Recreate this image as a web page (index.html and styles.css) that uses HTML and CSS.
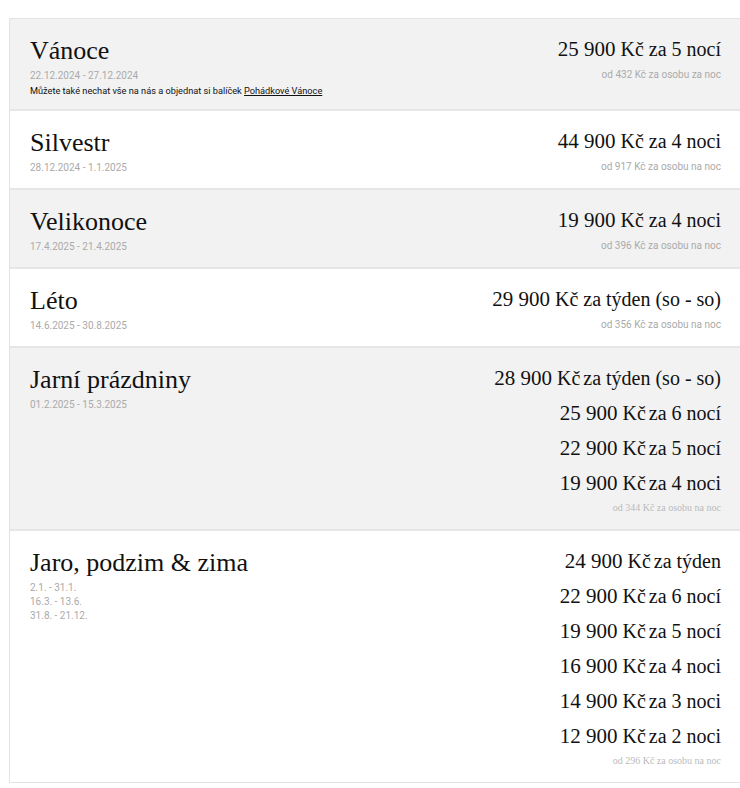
FILE: index.html
```html
<!DOCTYPE html>
<html lang="cs">
<head>
<meta charset="utf-8">
<title>Ceník</title>
<link rel="stylesheet" href="styles.css">
</head>
<body>
<div class="list">
  <div class="row alt first">
    <div class="left">
      <div class="title">Vánoce</div>
      <div class="dates">22.12.2024 - 27.12.2024</div>
      <div class="note">Můžete také nechat vše na nás a objednat si balíček <a href="#">Pohádkové Vánoce</a></div>
    </div>
    <div class="right">
      <div class="price"><span class="num">25 900</span> Kč za 5 nocí</div>
      <div class="sub">od 432 Kč za osobu za noc</div>
    </div>
  </div>
  <div class="row">
    <div class="left">
      <div class="title">Silvestr</div>
      <div class="dates">28.12.2024 - 1.1.2025</div>
    </div>
    <div class="right">
      <div class="price"><span class="num">44 900</span> Kč za 4 noci</div>
      <div class="sub">od 917 Kč za osobu na noc</div>
    </div>
  </div>
  <div class="row alt">
    <div class="left">
      <div class="title">Velikonoce</div>
      <div class="dates">17.4.2025 - 21.4.2025</div>
    </div>
    <div class="right">
      <div class="price"><span class="num">19 900</span> Kč za 4 noci</div>
      <div class="sub">od 396 Kč za osobu na noc</div>
    </div>
  </div>
  <div class="row">
    <div class="left">
      <div class="title">Léto</div>
      <div class="dates">14.6.2025 - 30.8.2025</div>
    </div>
    <div class="right">
      <div class="price"><span class="num">29 900</span> Kč za týden (so - so)</div>
      <div class="sub">od 356 Kč za osobu na noc</div>
    </div>
  </div>
  <div class="row alt tall">
    <div class="left">
      <div class="title">Jarní prázdniny</div>
      <div class="dates">01.2.2025 - 15.3.2025</div>
    </div>
    <div class="right multi">
      <div class="price"><span class="num">28 900</span> <span class="cur">Kč</span>za týden (so - so)</div>
      <div class="price"><span class="num">25 900</span> <span class="cur">Kč</span>za 6 nocí</div>
      <div class="price"><span class="num">22 900</span> <span class="cur">Kč</span>za 5 nocí</div>
      <div class="price"><span class="num">19 900</span> <span class="cur">Kč</span>za 4 noci</div>
      <div class="sub serif">od 344 Kč za osobu na noc</div>
    </div>
  </div>
  <div class="row tall last">
    <div class="left">
      <div class="title">Jaro, podzim &amp; zima</div>
      <div class="dates">2.1. - 31.1.</div>
      <div class="dates">16.3. - 13.6.</div>
      <div class="dates">31.8. - 21.12.</div>
    </div>
    <div class="right multi">
      <div class="price"><span class="num">24 900</span> <span class="cur">Kč</span>za týden</div>
      <div class="price"><span class="num">22 900</span> <span class="cur">Kč</span>za 6 nocí</div>
      <div class="price"><span class="num">19 900</span> <span class="cur">Kč</span>za 5 nocí</div>
      <div class="price"><span class="num">16 900</span> <span class="cur">Kč</span>za 4 noci</div>
      <div class="price"><span class="num">14 900</span> <span class="cur">Kč</span>za 3 noci</div>
      <div class="price"><span class="num">12 900</span> <span class="cur">Kč</span>za 2 noci</div>
      <div class="sub serif">od 296 Kč za osobu na noc</div>
    </div>
  </div>
</div>
</body>
</html>
```
FILE: styles.css
```css
html, body {
  margin: 0;
  padding: 0;
  background: #fff;
}
body {
  padding: 18px 0 0 9px;
  font-family: Roboto, "Liberation Sans", sans-serif;
  color: #111;
}
.list {
  border: 1px solid #e3e3e3;
  border-right: none;
}
.row {
  display: flex;
  justify-content: space-between;
  align-items: flex-start;
  padding: 16px 19px 13px 20px;
  border-top: 2px solid #e6e6e6;
  background: #fff;
}
.row.first {
  border-top: none;
  padding-bottom: 10px;
}
.row.tall {
  padding-bottom: 14px;
}
.row.tall.last {
  padding-bottom: 14px;
}
.row.alt {
  background: #f2f2f2;
}
.title {
  font-family: "Liberation Serif", "DejaVu Serif", serif;
  font-size: 26px;
  line-height: 32px;
  margin-bottom: 2px;
  color: #111;
}
.dates {
  font-size: 10px;
  line-height: 14px;
  color: #aaa;
}
.note {
  font-size: 9.2px;
  line-height: 16px;
  color: #111;
}
.note a {
  color: #111;
  text-decoration: underline;
}
.right {
  display: flex;
  flex-direction: column;
  align-items: flex-end;
  text-align: right;
}
.price {
  font-family: "Liberation Serif", "DejaVu Serif", serif;
  font-size: 20px;
  line-height: 28px;
  color: #111;
  white-space: nowrap;
}
.price .num {
  font-size: 21px;
}
.multi .price + .price {
  margin-top: 7px;
}
.cur {
  margin-right: 3px;
}
.sub {
  margin-top: 5px;
  font-size: 10px;
  line-height: 14px;
  color: #aaa;
}
.sub.serif {
  margin-top: 4px;
  font-family: "Liberation Serif", "DejaVu Serif", serif;
  font-size: 10px;
  color: #bbb;
}
```
